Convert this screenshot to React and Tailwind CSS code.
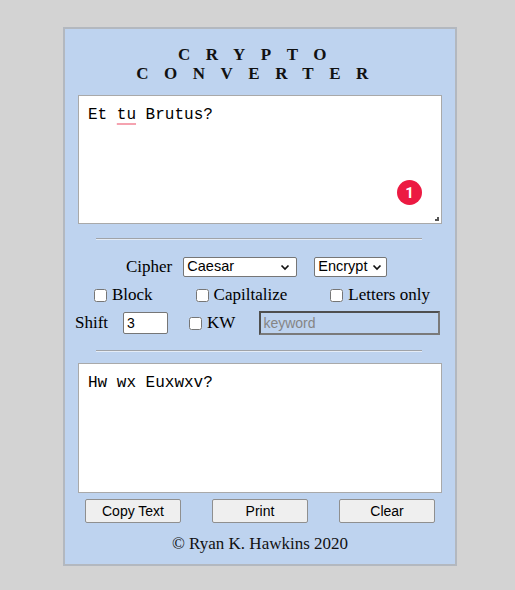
import React, { useState } from 'react';

const serif = { fontFamily: '"Liberation Serif", "Times New Roman", serif' };

function Chevron() {
  return (
    <svg className="w-[10px] h-[10px]" viewBox="0 0 10 10" fill="none" stroke="#111" strokeWidth="1.7">
      <path d="M1.5 3.5 L5 7 L8.5 3.5" />
    </svg>
  );
}

function Check({ label }) {
  return (
    <label className="flex items-center h-[18px] text-[17px] text-black" style={serif}>
      <input type="checkbox" className="w-[13px] h-[13px] m-0 mr-[5px]" />
      <span>{label}</span>
    </label>
  );
}

function Btn({ children }) {
  return (
    <button
      className="w-[96px] h-[24px] bg-[#efefef] border border-[#8f8f8f] rounded-[2px] text-[14px] text-black"
      style={{ fontFamily: '"Liberation Sans", Arial, sans-serif' }}
    >
      {children}
    </button>
  );
}

export default function App() {
  const [shift, setShift] = useState('3');

  return (
    <div className="min-h-[590px] bg-[#d3d3d3] pt-[27px]">
      <div className="ml-[63px] w-[394px] h-[539px] border-2 border-[#b3b8bf] bg-[#bed3ef] flex flex-col">
        {/* Title */}
        <h1
          className="pt-[16px] text-center font-bold text-[17px] leading-[19px] tracking-[15.5px] text-[#111]"
          style={serif}
        >
          <div>CRYPTO</div>
          <div>CONVERTER</div>
        </h1>

        {/* Input */}
        <div
          className="relative ml-[13px] mt-[12px] w-[364px] h-[129px] bg-white border border-[#a9a9a9] pl-[9px] pt-[10px] text-[16px] leading-[18px] text-black"
          style={{ fontFamily: '"Liberation Mono", "Courier New", monospace' }}
        >
          Et <span className="underline decoration-[#f5a3b0] decoration-2 underline-offset-[4px]">tu</span> Brutus?
          <div
            className="absolute right-[19px] bottom-[18px] w-[25px] h-[25px] rounded-full bg-[#ec1a42] text-white text-[15px] font-bold flex items-center justify-center"
            style={{ fontFamily: 'Roboto, "Liberation Sans", sans-serif' }}
          >
            1
          </div>
          <svg className="absolute right-[2px] bottom-[2px] w-[4px] h-[4px]" viewBox="0 0 4 4">
            <rect x="2" y="0" width="2" height="4" fill="#555" />
            <rect x="0" y="2" width="4" height="2" fill="#555" />
          </svg>
        </div>

        <div className="ml-[31px] mt-[14px] w-[326px] h-[2px] border-t border-[#a0a3a8] border-b border-b-[#e4ecf7]" />

        {/* Cipher row */}
        <div className="mt-[17px] h-[20px] flex items-center pl-[61px] text-black">
          <span className="text-[17px] mr-[11px]" style={serif}>Cipher</span>
          <div
            className="w-[114px] h-[20px] bg-white border border-[#767676] rounded-[2px] flex items-center justify-between pl-[3px] pr-[6px] text-[14.5px]"
            style={{ fontFamily: '"Liberation Sans", Arial, sans-serif' }}
          >
            <span>Caesar</span>
            <Chevron />
          </div>
          <div
            className="ml-[17px] w-[73px] h-[20px] bg-white border border-[#767676] rounded-[2px] flex items-center justify-between pl-[3px] pr-[4px] text-[14.5px]"
            style={{ fontFamily: '"Liberation Sans", Arial, sans-serif' }}
          >
            <span>Encrypt</span>
            <Chevron />
          </div>
        </div>

        {/* Options */}
        <div className="mt-[9px] flex items-center pl-[29px] gap-[43px]">
          <Check label="Block" />
          <Check label="Capiltalize" />
          <Check label="Letters only" />
        </div>

        {/* Shift row */}
        <div className="mt-[7px] h-[24px] flex items-center pl-[10px] text-black">
          <span className="text-[17px]" style={serif}>Shift</span>
          <input
            value={shift}
            onChange={(e) => setShift(e.target.value)}
            className="ml-[15px] w-[45px] h-[22px] bg-white border border-[#767676] rounded-[2px] pl-[3px] text-[14px] outline-none"
            style={{ fontFamily: '"Liberation Sans", Arial, sans-serif' }}
          />
          <div className="ml-[21px]">
            <Check label="KW" />
          </div>
          <input
            disabled
            placeholder="keyword"
            className="ml-[24px] w-[181px] h-[24px] bg-transparent border-2 border-[#4f4f4f] border-b-[#7a7a7a] border-r-[#7a7a7a] pl-[2px] text-[14px] placeholder-[#858585]"
            style={{ fontFamily: '"Liberation Sans", Arial, sans-serif' }}
          />
        </div>

        <div className="ml-[31px] mt-[15px] w-[326px] h-[2px] border-t border-[#a0a3a8] border-b border-b-[#e4ecf7]" />

        {/* Output */}
        <div
          className="ml-[13px] mt-[11px] w-[364px] h-[130px] bg-white border border-[#a9a9a9] pl-[9px] pt-[10px] text-[16px] leading-[18px] text-black"
          style={{ fontFamily: '"Liberation Mono", "Courier New", monospace' }}
        >
          Hw wx Euxwxv?
        </div>

        {/* Buttons */}
        <div className="mt-[6px] flex justify-between px-[20px]">
          <Btn>Copy Text</Btn>
          <Btn>Print</Btn>
          <Btn>Clear</Btn>
        </div>

        <p className="mt-[11px] text-center text-[17px] leading-[20px] text-[#111]" style={serif}>
          © Ryan K. Hawkins 2020
        </p>
      </div>
    </div>
  );
}
